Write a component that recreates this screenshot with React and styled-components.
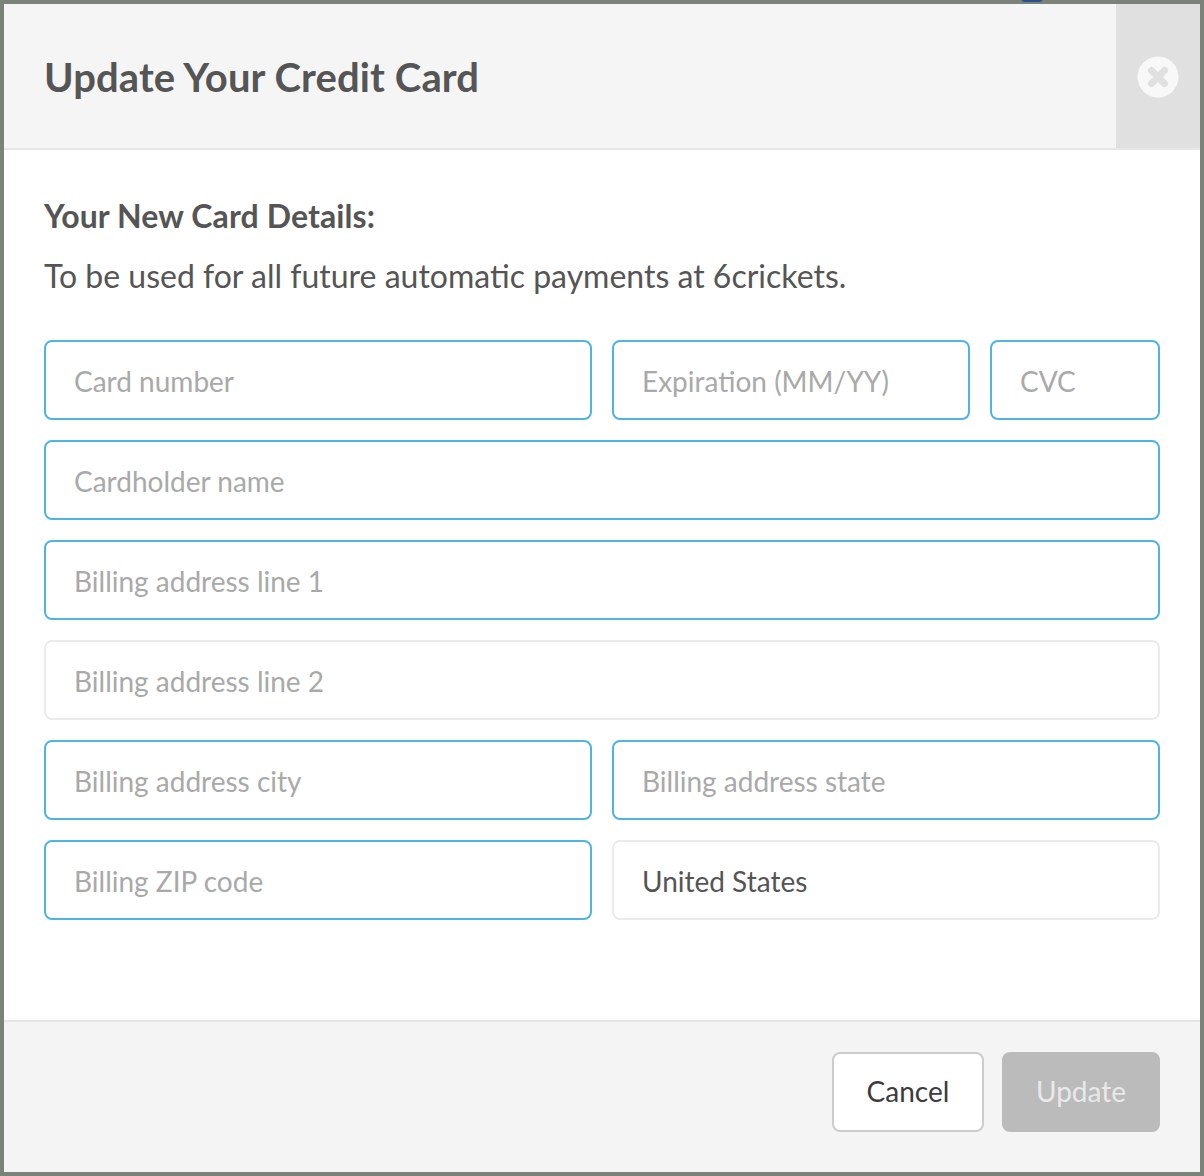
import styled, {createGlobalStyle} from 'styled-components';

const GlobalStyle = createGlobalStyle`
  html, body {
    margin: 0;
    padding: 0;
    background: #7b8279;
  }
  * {
    box-sizing: border-box;
  }
`;

export default function App() {
  return (
    <>
      <GlobalStyle />
      <Overlay>
        <Modal>
          <Header>
            <Title>Update Your Credit Card</Title>
            <CloseArea aria-label="Close">
              <svg width="42" height="42" viewBox="0 0 42 42">
                <circle cx="21" cy="21" r="20.5" fill="#f8f8f8" />
                <path d="M14.5 14.5 L27.5 27.5 M27.5 14.5 L14.5 27.5" stroke="#e0e0e0" strokeWidth="7" strokeLinecap="round" />
              </svg>
            </CloseArea>
          </Header>
          <Body>
            <Subtitle>Your New Card Details:</Subtitle>
            <Intro>To be used for all future automatic payments at 6crickets.</Intro>
            <Form>
              <Row $columns="548px 358px 170px">
                <Field $required placeholder="Card number" />
                <Field $required placeholder="Expiration (MM/YY)" />
                <Field $required placeholder="CVC" />
              </Row>
              <Row>
                <Field $required placeholder="Cardholder name" />
              </Row>
              <Row>
                <Field $required placeholder="Billing address line 1" />
              </Row>
              <Row>
                <Field placeholder="Billing address line 2" />
              </Row>
              <Row $columns="548px 548px">
                <Field $required placeholder="Billing address city" />
                <Field $required placeholder="Billing address state" />
              </Row>
              <Row $columns="548px 548px">
                <Field $required placeholder="Billing ZIP code" />
                <Field defaultValue="United States" />
              </Row>
            </Form>
          </Body>
          <Footer>
            <CancelButton>Cancel</CancelButton>
            <UpdateButton disabled>Update</UpdateButton>
          </Footer>
        </Modal>
      </Overlay>
    </>
  );
}

const Overlay = styled.div`
  position: relative;
  width: 1204px;
  height: 1176px;
  padding: 4px;
  overflow: hidden;
  &::before {
    content: '';
    position: absolute;
    top: -6px;
    left: 1021px;
    width: 22px;
    height: 8px;
    border-radius: 4px;
    background: #2c4f8f;
  }
`;

const Modal = styled.div`
  position: relative;
  display: flex;
  flex-direction: column;
  width: 1196px;
  height: 1168px;
  background: #fff;
  font-family: Lato, 'Open Sans', sans-serif;
  color: #555;
`;

const Header = styled.div`
  display: flex;
  align-items: stretch;
  justify-content: space-between;
  height: 146px;
  background: #f5f5f5;
  border-bottom: 2px solid #e6e6e6;
`;

const Title = styled.h1`
  margin: 0;
  padding: 49px 0 0 40px;
  font-size: 40px;
  line-height: 48px;
  font-weight: 700;
  letter-spacing: 0.1px;
  color: #555;
`;

const CloseArea = styled.button`
  display: flex;
  align-items: center;
  justify-content: center;
  width: 84px;
  padding: 2px 0 0;
  border: 0;
  background: #e0e0e0;
`;

const Body = styled.div`
  flex: 1;
  padding: 46px 40px 0;
`;

const Subtitle = styled.h2`
  margin: 0;
  font-size: 32px;
  line-height: 40px;
  font-weight: 700;
  letter-spacing: 0.1px;
  color: #555;
`;

const Intro = styled.p`
  margin: 20px 0 0;
  font-size: 32px;
  line-height: 40px;
  color: #555;
`;

const Form = styled.div`
  display: flex;
  flex-direction: column;
  gap: 20px;
  margin-top: 44px;
`;

const Row = styled.div`
  display: grid;
  grid-template-columns: ${props => props.$columns || '1fr'};
  gap: 20px;
`;

const Field = styled.input`
  width: 100%;
  height: 80px;
  padding: 2px 28px 0;
  border: 2px solid ${props => (props.$required ? '#4fb3e3' : '#ebebeb')};
  border-radius: 8px;
  outline: none;
  background: #fff;
  font-family: inherit;
  font-size: 28px;
  color: #555;
  &::placeholder {
    color: #a9a9a9;
    opacity: 1;
  }
`;

const Footer = styled.div`
  display: flex;
  justify-content: flex-end;
  gap: 18px;
  height: 152px;
  padding: 30px 40px 0;
  background: #f4f4f4;
  border-top: 2px solid #e6e6e6;
`;

const CancelButton = styled.button`
  width: 152px;
  height: 80px;
  padding: 0 0 2px;
  border: 2px solid #cccccc;
  border-radius: 8px;
  background: #fff;
  font-family: inherit;
  font-size: 28px;
  color: #3c3c3c;
`;

const UpdateButton = styled.button`
  width: 158px;
  height: 80px;
  padding: 0 0 2px;
  border: 0;
  border-radius: 8px;
  background: #bbbbbb;
  font-family: inherit;
  font-size: 28px;
  color: #e9e9e9;
`;
